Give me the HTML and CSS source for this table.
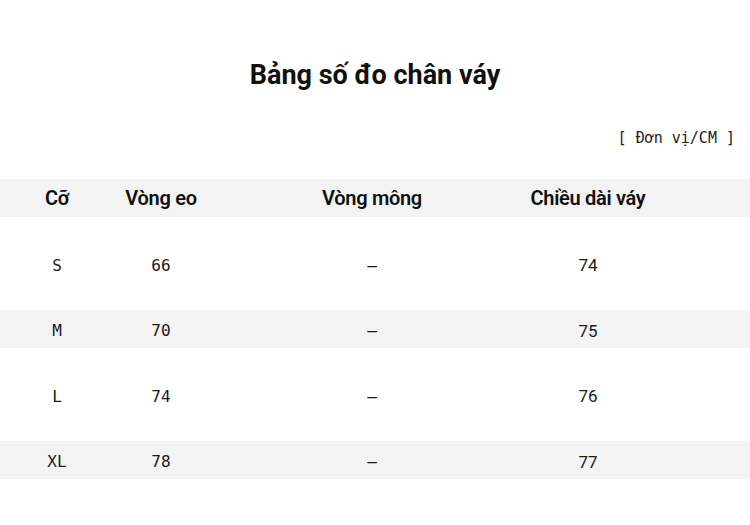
FILE: index.html
```html
<!DOCTYPE html>
<html lang="vi">
<head>
<meta charset="utf-8">
<link rel="stylesheet" href="styles.css">
</head>
<body>
<div class="page">
  <h1 class="title">Bảng số đo chân váy</h1>
  <div class="unit">[ Đơn vị/CM ]</div>
  <div class="table">
    <div class="row head">
      <div class="cell">Cỡ</div>
      <div class="cell">Vòng eo</div>
      <div class="cell">Vòng mông</div>
      <div class="cell">Chiều dài váy</div>
      <div class="cell"></div>
    </div>
    <div class="row tall">
      <div class="cell mono">S</div>
      <div class="cell mono">66</div>
      <div class="cell mono">–</div>
      <div class="cell sans">74</div>
      <div class="cell"></div>
    </div>
    <div class="row band">
      <div class="cell mono">M</div>
      <div class="cell mono">70</div>
      <div class="cell mono">–</div>
      <div class="cell sans">75</div>
      <div class="cell"></div>
    </div>
    <div class="row tall">
      <div class="cell mono">L</div>
      <div class="cell mono">74</div>
      <div class="cell mono">–</div>
      <div class="cell sans">76</div>
      <div class="cell"></div>
    </div>
    <div class="row band">
      <div class="cell mono">XL</div>
      <div class="cell mono">78</div>
      <div class="cell mono">–</div>
      <div class="cell sans">77</div>
      <div class="cell"></div>
    </div>
  </div>
</div>
</body>
</html>
```
FILE: styles.css
```css
html, body {
  margin: 0;
  padding: 0;
  background: #ffffff;
}
body {
  font-family: Roboto, "Noto Sans", sans-serif;
  color: #111111;
  width: 750px;
  height: 525px;
  overflow: hidden;
}
.page {
  display: flex;
  flex-direction: column;
  padding-top: 57px;
}
.title {
  margin: 0;
  text-align: center;
  font-size: 27px;
  font-weight: 700;
  line-height: 36px;
  color: #111;
}
.unit {
  margin-top: 35px;
  align-self: flex-end;
  margin-right: 15px;
  font-family: "DejaVu Sans Mono", "Liberation Mono", monospace;
  font-size: 15px;
  line-height: 20px;
  white-space: pre;
  color: #222;
}
.table {
  margin-top: 31px;
  display: flex;
  flex-direction: column;
}
.row {
  display: grid;
  grid-template-columns: 114px 94px 328px 104px 1fr;
  align-items: center;
}
.cell {
  justify-self: center;
  text-align: center;
  white-space: nowrap;
}
.head {
  height: 38px;
  background: #f3f3f3;
  font-size: 20px;
  font-weight: 600;
  letter-spacing: -0.3px;
}
.tall {
  height: 93px;
}
.band {
  height: 38px;
  background: #f3f3f3;
}
.tall .cell, .band .cell {
  padding-top: 3px;
}
.mono {
  font-family: "DejaVu Sans Mono", "Liberation Mono", monospace;
  font-size: 16px;
  color: #1a1a1a;
}
.sans {
  font-family: Roboto, "Noto Sans", sans-serif;
  font-size: 17px;
  color: #1a1a1a;
}
```
